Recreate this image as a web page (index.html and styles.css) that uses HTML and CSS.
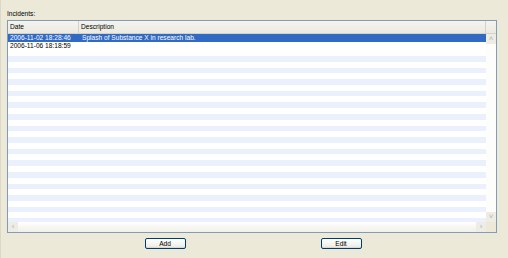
FILE: index.html
```html
<!DOCTYPE html>
<html lang="en">
<head>
    <meta charset="UTF-8">
    <title>Incidents</title>
    <link rel="stylesheet" href="styles.css">
</head>
<body>
    <div class="panel">
        <div class="label">Incidents:</div>
        <div class="table">
            <div class="header">
                <div class="col date">Date</div>
                <div class="col desc">Description</div>
            </div>
            <div class="header-corner"></div>
            <div class="viewport">
                <div class="row selected">
                    <div class="col date">2006-11-02 18:28:46</div>
                    <div class="col desc">Splash of Substance X in research lab.</div>
                </div>
                <div class="row">
                    <div class="col date">2006-11-06 18:18:59</div>
                    <div class="col desc"></div>
                </div>
                <div class="stripes"></div>
            </div>
            <div class="vscroll">
                <div class="arrow">&#708;</div>
                <div class="track"></div>
                <div class="arrow">&#709;</div>
            </div>
            <div class="hscroll">
                <div class="arrow">&lsaquo;</div>
                <div class="track"></div>
                <div class="arrow">&rsaquo;</div>
            </div>
            <div class="corner"></div>
        </div>
        <div class="buttons">
            <button type="button">Add</button>
            <button type="button">Edit</button>
        </div>
    </div>
</body>
</html>
```
FILE: styles.css
```css
*{
    margin: 0;
    padding: 0;
    box-sizing: border-box;
}
body{
    background-color: #ECE9D8;
    font-family: "Liberation Sans", Arial, sans-serif;
    font-size: 6.6px;
    color: #000;
    width: 508px;
    height: 258px;
    overflow: hidden;
}
.panel{
    height: 258px;
    border-left: 1px solid #DCD8C4;
    padding: 9px 11px 0 6px;
}
.label{
    height: 11px;
    line-height: 10px;
}
.table{
    width: 490px;
    height: 213px;
    border: 1px solid #7F9DB9;
    background-color: #fff;
    display: grid;
    grid-template-columns: 478px 10px;
    grid-template-rows: 13px 1fr 10px;
}
.header{
    display: flex;
    background: linear-gradient(#F4F3EE, #EBEAE2);
    border-bottom: 1px solid #D6D2C2;
}
.header .col{
    line-height: 12px;
    border-right: 1px solid #D6D2C2;
}
.header-corner{
    background: linear-gradient(#F4F3EE, #EBEAE2);
    border-bottom: 1px solid #D6D2C2;
}
.col{
    padding-left: 2px;
    white-space: nowrap;
    overflow: hidden;
}
.col.date{
    width: 71px;
}
.col.desc{
    flex: 1;
}
.viewport{
    display: flex;
    flex-direction: column;
    overflow: hidden;
}
.row{
    display: flex;
    height: 8px;
    line-height: 8px;
    flex-shrink: 0;
}
.row .col.desc{
    padding-left: 3px;
}
.row.selected{
    background-color: #316AC5;
    color: #fff;
}
.stripes{
    flex: 1;
    background: repeating-linear-gradient(#fff 0, #fff 6px, #EAF0FC 6px, #EAF0FC 11.6px);
}
.vscroll{
    display: flex;
    flex-direction: column;
    background-color: #FDFDFB;
}
.vscroll .track{
    flex: 1;
}
.hscroll{
    display: flex;
    background: linear-gradient(#FFFFFF, #F0EFE8);
}
.hscroll .track{
    flex: 1;
}
.arrow{
    width: 10px;
    height: 10px;
    background-color: #EEEDE5;
    color: #B5B3A8;
    font-size: 8px;
    line-height: 10px;
    text-align: center;
}
.corner{
    background-color: #ECE9D8;
}
.buttons{
    display: flex;
    justify-content: center;
    gap: 135px;
    padding-top: 5px;
    padding-left: 2px;
}
.buttons button{
    width: 41px;
    height: 11px;
    font-family: "Liberation Sans", Arial, sans-serif;
    font-size: 6.6px;
    line-height: 9px;
    border: 1px solid #003C74;
    border-radius: 2px;
    background: linear-gradient(#FFFFFF, #F0F0EA 80%, #D6D0C5);
    color: #000;
}
```
